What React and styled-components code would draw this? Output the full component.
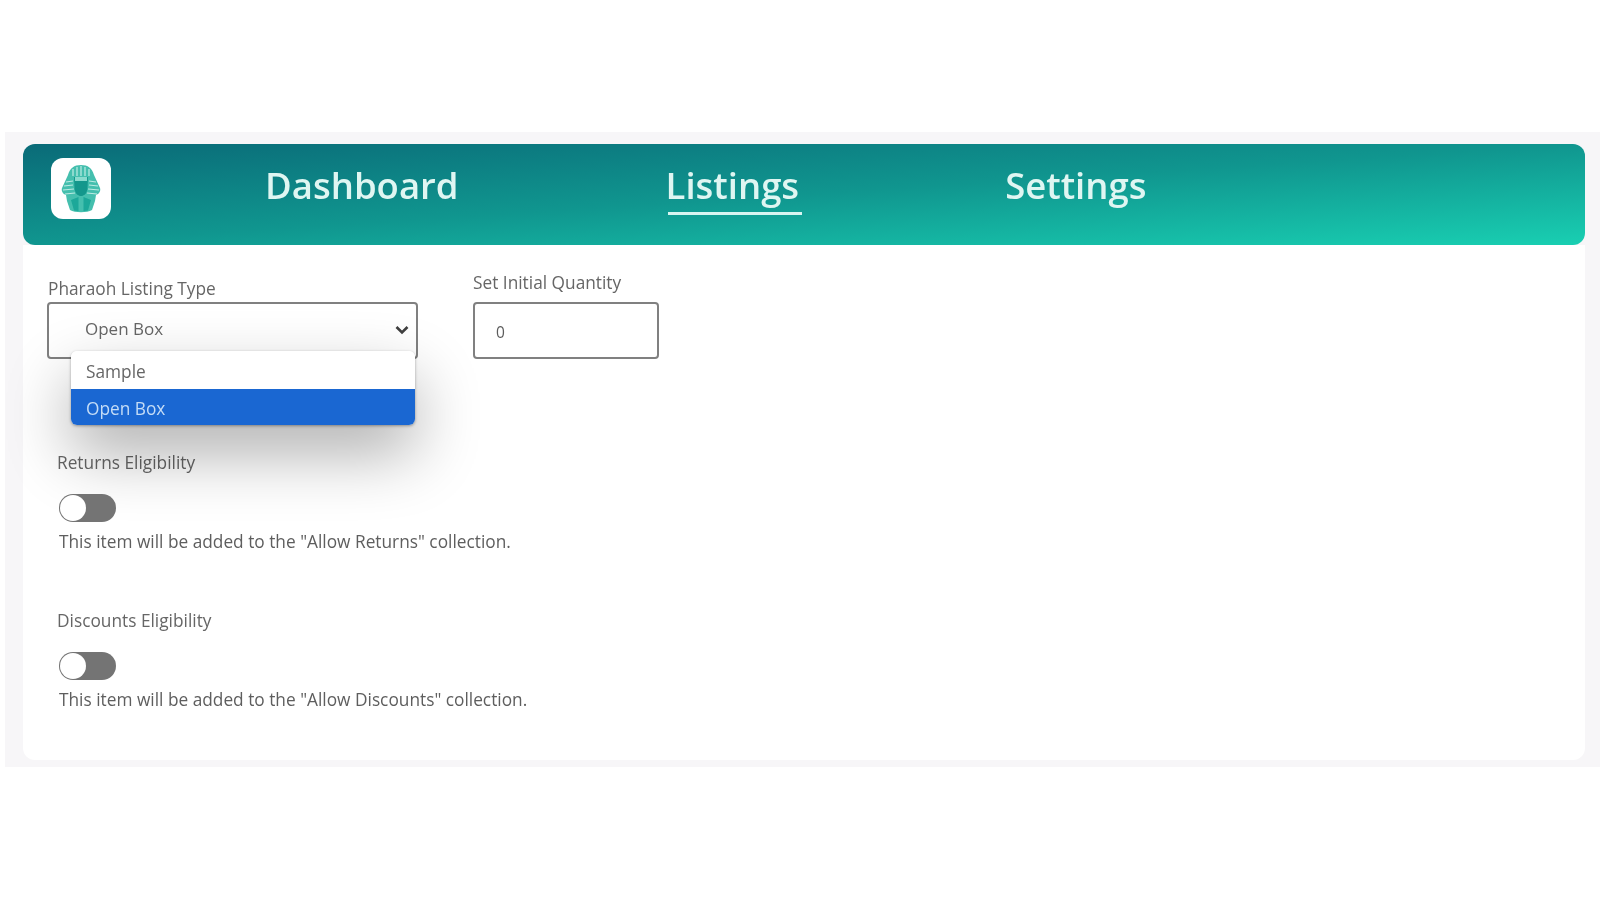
import React from "react";
import styled, { createGlobalStyle } from "styled-components";

const Global = createGlobalStyle`
  html, body { margin: 0; padding: 0; background: #fff; }
  body { font-family: "Open Sans", "Liberation Sans", sans-serif; }
`;

const Page = styled.div`
  width: 1600px;
  height: 900px;
  padding: 132px 0 0 5px;
  box-sizing: border-box;
  overflow: hidden;
  filter: blur(0.7px);
`;

const Shell = styled.div`
  height: 635px;
  background: #f7f6f8;
  padding: 12px 15px 7px 18px;
  box-sizing: border-box;
  display: flex;
  flex-direction: column;
`;

const Header = styled.header`
  height: 101px;
  flex: none;
  border-radius: 12px;
  background: linear-gradient(176.3deg, #0a6b78 0%, #10968f 50%, #19cfb2 100%);
  display: flex;
  align-items: flex-start;
  padding: 14px 0 0 28px;
  box-sizing: border-box;
`;

const LogoTile = styled.div`
  width: 60px;
  height: 61px;
  border-radius: 12px;
  background: #fff;
  display: flex;
  align-items: center;
  justify-content: center;
  flex: none;
`;

const Nav = styled.nav`
  display: flex;
  margin-left: 154px;
`;

const NavItem = styled.a`
  position: relative;
  font-size: 36.5px;
  line-height: 50px;
  font-weight: 600;
  color: #dff6f2;
  margin-right: ${(p) => p.$gap}px;
  margin-top: 2px;
  height: 50px;

  ${(p) =>
    p.$active &&
    `
    &::after {
      content: "";
      position: absolute;
      left: 2px;
      right: -3px;
      bottom: -5px;
      height: 3px;
      background: #d8f5f1;
    }
  `}
`;

const Card = styled.main`
  flex: 1;
  background: #fff;
  border-radius: 0 0 12px 12px;
  padding: 27px 0 0 24px;
  box-sizing: border-box;
`;

const TopRow = styled.div`
  display: flex;
  align-items: flex-end;
  gap: 55px;
`;

const Field = styled.div`
  display: flex;
  flex-direction: column;
  position: relative;
`;

const Label = styled.label`
  font-size: 17.3px;
  line-height: 22px;
  color: #666;
  margin: 0 0 ${(p) => p.$mb}px ${(p) => p.$ml}px;
`;

const SelectBox = styled.div`
  width: 371px;
  height: 57px;
  box-sizing: border-box;
  border: 2px solid #808080;
  border-radius: 4px;
  background: #fff;
  display: flex;
  align-items: flex-start;
  justify-content: space-between;
  padding: 13px 6px 0 36px;
  font-size: 17px;
  line-height: 24px;
  color: #666;
`;

const Menu = styled.ul`
  position: absolute;
  left: 24px;
  top: 73px;
  width: 344px;
  margin: 0;
  padding: 0;
  list-style: none;
  background: #fff;
  border-radius: 6px;
  overflow: hidden;
  box-shadow: 0 1px 3px rgba(0, 0, 0, 0.35), 0 28px 65px rgba(0, 0, 0, 0.32);
`;

const MenuItem = styled.li`
  height: ${(p) => (p.$selected ? 36 : 38)}px;
  line-height: ${(p) => (p.$selected ? 40 : 42)}px;
  padding-left: 15px;
  font-size: 17.3px;
  background: ${(p) => (p.$selected ? "#1a67d2" : "#fff")};
  color: ${(p) => (p.$selected ? "#c4dcf6" : "#666")};
`;

const QuantityInput = styled.div`
  width: 186px;
  height: 57px;
  box-sizing: border-box;
  border: 2px solid #808080;
  border-radius: 4px;
  padding: 17px 0 0 21px;
  font-size: 15.5px;
  line-height: 22px;
  color: #5c5c5c;
`;

const Eligibility = styled.section`
  margin: ${(p) => p.$mt}px 0 0 10px;
`;

const EligLabel = styled.div`
  font-size: 17.3px;
  line-height: 22px;
  color: #666;
`;

const Toggle = styled.div`
  width: 57px;
  height: 28px;
  border-radius: 14px;
  background: #747474;
  margin: 19.5px 0 0 2px;
  position: relative;
`;

const Knob = styled.span`
  position: absolute;
  left: 1px;
  top: 1px;
  width: 26px;
  height: 26px;
  border-radius: 50%;
  background: #fff;
`;

const Help = styled.p`
  margin: 9.5px 0 0 2px;
  font-size: 17.3px;
  line-height: 22px;
  color: #5e5e5e;
`;

const Chevron = () => (
  <svg width="16" height="12" viewBox="0 0 16 12" style={{ marginTop: 7 }}>
    <path d="M2.5 3 L8 8.5 L13.5 3" fill="none" stroke="#3f3f3f" strokeWidth="2.6" />
  </svg>
);

const PharaohLogo = () => (
  <svg width="44" height="50" viewBox="0 0 44 50">
    <path
      d="M22 1 C29 1 33 4 35 11 L41 24 C42 27 40 30 37 31 L36 37 L33 46 C28 49 16 49 11 46 L8 37 L7 31 C4 30 2 27 3 24 L9 11 C11 4 15 1 22 1 Z"
      fill="#45bfae"
    />
    <g stroke="#bdebe3" strokeWidth="1.2" fill="none">
      <path d="M14 5 V12 M18 3 V12 M22 2 V12 M26 3 V12 M30 5 V12" />
      <path d="M7 18 L14 17 M5 22 L14 21 M4 26 L15 25 M6 30 L16 29" />
      <path d="M37 18 L30 17 M39 22 L30 21 M40 26 L29 25 M38 30 L28 29" />
    </g>
    <path d="M15 13 H29 L28.5 25 C27.5 30 25 32 22 32 C19 32 16.5 30 15.5 25 Z" fill="#14978c" />
    <path d="M16 13 H28 V17 H16 Z" fill="#8adbce" />
    <path d="M12 36 L19.5 33 V47 L15 46.5 Z M32 36 L24.5 33 V47 L29 46.5 Z" fill="#1ca899" />
  </svg>
);

export default function App() {
  return (
    <Page>
      <Global />
      <Shell>
        <Header>
          <LogoTile>
            <PharaohLogo />
          </LogoTile>
          <Nav>
            <NavItem $gap={207}>Dashboard</NavItem>
            <NavItem $gap={206} $active>Listings</NavItem>
            <NavItem>Settings</NavItem>
          </Nav>
        </Header>
        <Card>
          <TopRow>
            <Field>
              <Label $mb={2} $ml={1}>Pharaoh Listing Type</Label>
              <SelectBox>
                Open Box
                <Chevron />
              </SelectBox>
              <Menu>
                <MenuItem>Sample</MenuItem>
                <MenuItem $selected>Open Box</MenuItem>
              </Menu>
            </Field>
            <Field>
              <Label $mb={8} $ml={0}>Set Initial Quantity</Label>
              <QuantityInput>0</QuantityInput>
            </Field>
          </TopRow>
          <Eligibility $mt={93}>
            <EligLabel>Returns Eligibility</EligLabel>
            <Toggle><Knob /></Toggle>
            <Help>This item will be added to the "Allow Returns" collection.</Help>
          </Eligibility>
          <Eligibility $mt={57}>
            <EligLabel>Discounts Eligibility</EligLabel>
            <Toggle><Knob /></Toggle>
            <Help>This item will be added to the "Allow Discounts" collection.</Help>
          </Eligibility>
        </Card>
      </Shell>
    </Page>
  );
}
